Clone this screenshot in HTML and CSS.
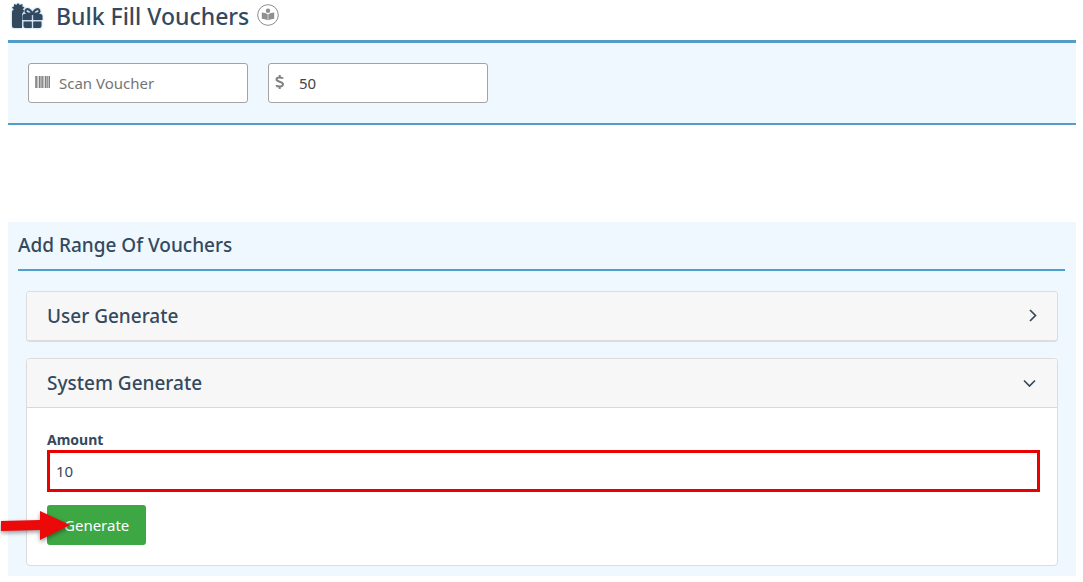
FILE: index.html
```html
<!DOCTYPE html>
<html lang="en">
    <head>
        <meta charset="UTF-8">
        <title>Bulk Fill Vouchers</title>
        <link rel="stylesheet" href="styles.css">
    </head>
    <body>
        <header class="page_header">
            <svg class="gift_icon" viewBox="0 0 34 28" aria-hidden="true">
                <path d="M4 7.5 L1.8 5.5 L4 4.5 L4 2 L6.4 3 L8 1 L9.8 3 L12.5 2 L12.3 4.5 L14.5 5.5 L12.5 7.5 Q15 8.5 14 9 L12 12 V26 H4 Q2 26 2 24 V10 Q2 8 4 7.5 Z"/>
                <path d="M12.5 14 Q12.5 12 14.5 12 H21.8 V18 H12.5 Z M23.2 12 H30.5 Q32.5 12 32.5 14 V18 H23.2 Z M13.5 19.4 H21.8 V26 H15.5 Q13.5 26 13.5 24 Z M23.2 19.4 H31.5 V24 Q31.5 26 29.5 26 H23.2 Z"/>
                <path class="bow" d="M22.5 12 C20 6 15.5 6 15.5 9.5 Q16 12 22.5 12 C25 6 29.5 6 29.5 9.5 Q29 12 22.5 12"/>
            </svg>
            <h1>Bulk Fill Vouchers</h1>
            <a href="#help" class="help" aria-label="Help">
                <svg viewBox="0 0 22 22" aria-hidden="true">
                    <circle class="ring" cx="11" cy="11" r="10.3"/>
                    <circle cx="11" cy="6.7" r="2.2"/>
                    <path d="M4.8 8.5 Q8.5 8.5 10.7 10.3 V16.3 Q8 14.7 4.8 14.7 Z M17.2 8.5 Q13.5 8.5 11.3 10.3 V16.3 Q14 14.7 17.2 14.7 Z"/>
                </svg>
            </a>
        </header>

        <form class="scan_bar">
            <div class="icon_field">
                <svg viewBox="0 0 16 14" aria-hidden="true">
                    <path d="M0.2 1h1.7v12h-1.7z M2.5 1h.8v12h-.8z M4 1h1.6v12h-1.6z M6.3 1h1.6v12h-1.6z M8.5 1h.8v12h-.8z M10 1h1.6v12h-1.6z M12.2 1h.8v12h-.8z M13.5 1h1.5v12h-1.5z"/>
                </svg>
                <input type="text" placeholder="Scan Voucher" aria-label="Scan Voucher">
            </div>
            <div class="icon_field">
                <svg viewBox="0 0 16 14" aria-hidden="true">
                    <path class="dollar" d="M8 3.6 C7.4 2.3 1.5 1.6 1.5 4.5 C1.5 7.2 8 6.3 8 9.3 C8 12.4 2 11.8 1.2 10.2 M4.7 0 V2.4 M4.7 11.5 V14"/>
                </svg>
                <input type="text" value="50" aria-label="Voucher value">
            </div>
        </form>

        <main class="range">
            <h2>Add Range Of Vouchers</h2>
            <section class="card">
                <button type="button" class="card_header" aria-expanded="false">
                    User Generate
                    <svg viewBox="0 0 14 14" aria-hidden="true"><path d="M7 1 L12.5 6.5 L7 12"/></svg>
                </button>
            </section>
            <section class="card open">
                <button type="button" class="card_header" aria-expanded="true">
                    System Generate
                    <svg viewBox="0 0 14 14" aria-hidden="true"><path d="M1 4.5 L6.5 10 L12 4.5"/></svg>
                </button>
                <form class="card_body">
                    <label for="amount">Amount</label>
                    <input id="amount" type="text" value="10">
                    <div class="actions">
                        <button type="button" class="generate">Generate</button>
                        <svg class="arrow" viewBox="0 0 72 34" aria-hidden="true"><path d="M1 11 L40 10 V1 L70 15 L40 30 V20 L1 21 Z"/></svg>
                    </div>
                </form>
            </section>
        </main>
    </body>
</html>
```

FILE: styles.css
```css
* {
    box-sizing: border-box;
}
body {
    margin: 0;
    padding: 0 7px 0 8px;
    font-family: "Segoe UI", "Noto Sans", "Open Sans", sans-serif;
    font-size: 15px;
    color: #34495e;
    background-color: white;
}
h1, h2 {
    margin: 0;
    font-weight: 500;
}
input, button {
    font-family: inherit;
}
.page_header {
    display: flex;
    align-items: flex-start;
    height: 43px;
    padding: 2px 2px 0;
    border-bottom: 3px solid #559dc9;
}
.page_header h1 {
    margin: 0 8px 0 12px;
    font-size: 23px;
    line-height: 28px;
}
.gift_icon {
    width: 34px;
    height: 28px;
    fill: #34495e;
    filter: drop-shadow(0 0 1px #8ec4e8);
}
.gift_icon .bow {
    fill: none;
    stroke: #34495e;
    stroke-width: 2;
}
.help {
    margin-top: 2px;
}
.help svg {
    display: block;
    width: 22px;
    height: 22px;
    fill: #8f8f8f;
}
.help .ring {
    fill: none;
    stroke: #8f8f8f;
}
.scan_bar {
    display: flex;
    gap: 20px;
    padding: 20px;
    background-color: #eff7ff;
    border-bottom: 2px solid #559dc9;
}
.icon_field {
    display: flex;
    align-items: center;
    width: 220px;
    height: 40px;
    padding-left: 6px;
    background-color: white;
    border: 1px solid #a3a3a3;
    border-radius: 3px;
}
.icon_field svg {
    flex: none;
    width: 16px;
    height: 14px;
    margin-bottom: 2px;
    fill: #808080;
}
.icon_field .dollar {
    fill: none;
    stroke: #808080;
    stroke-width: 2;
}
.icon_field input {
    flex: 1;
    min-width: 0;
    padding: 0 8px;
    border: none;
    outline: none;
    background: none;
    font-size: 15px;
    color: #444;
}
.icon_field input::placeholder {
    color: #757575;
}
.range {
    margin-top: 97px;
    padding: 0 11px 10px 10px;
    background-color: #eff7ff;
}
.range h2 {
    margin-bottom: 20px;
    padding: 9px 0 10px;
    font-size: 19px;
    line-height: 28px;
    border-bottom: 2px solid #4f9fcf;
}
.card {
    margin: 0 7px 16px 8px;
    background-color: white;
    border: 1px solid #dcdcdc;
    border-bottom-width: 2px;
    border-radius: 4px;
}
.card.open {
    margin-bottom: 0;
    border-bottom-width: 1px;
}
.card_header {
    display: flex;
    justify-content: space-between;
    align-items: center;
    width: 100%;
    height: 48px;
    padding: 0 20px;
    border: none;
    border-radius: 3px;
    background-color: #f7f7f7;
    font-size: 19px;
    font-weight: 500;
    color: #34495e;
}
.open .card_header {
    height: 49px;
    border-bottom: 1px solid #d8d8d8;
    border-radius: 3px 3px 0 0;
}
.card_header svg {
    width: 14px;
    height: 14px;
    fill: none;
    stroke: #34495e;
    stroke-width: 1.7;
}
.card_body {
    padding: 22px 17px 20px 20px;
}
.card_body label {
    display: block;
    font-size: 14px;
    font-weight: 700;
    line-height: 20px;
}
.card_body input {
    display: block;
    width: 100%;
    height: 42px;
    padding: 0 6px;
    border: 3px solid #eb0000;
    outline: none;
    font-size: 15px;
    color: #34495e;
}
.actions {
    position: relative;
    margin-top: 13px;
}
.generate {
    display: block;
    height: 40px;
    padding: 0 17px;
    border: none;
    border-radius: 3px;
    background-color: #3da744;
    font-size: 15px;
    color: white;
}
/* pointer drawn over the button */
.arrow {
    position: absolute;
    left: -47px;
    top: 5px;
    width: 72px;
    height: 34px;
    fill: #eb0909;
    filter: drop-shadow(0 2px 2px rgba(0, 0, 0, 0.4));
}
```
